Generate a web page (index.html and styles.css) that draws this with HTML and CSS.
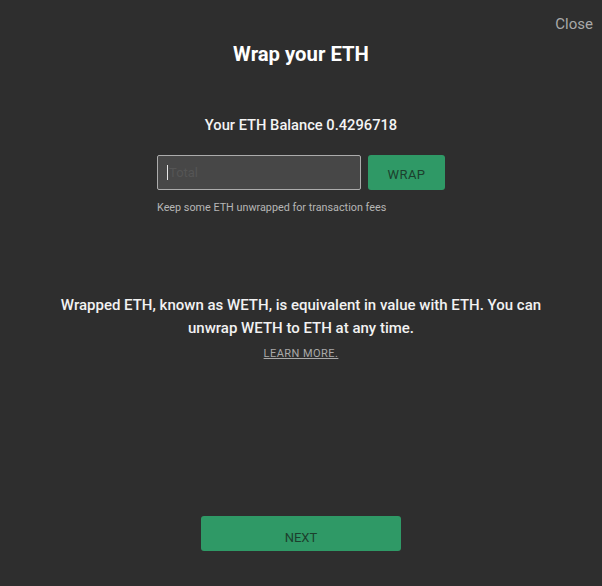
FILE: index.html
```html
<!DOCTYPE html>
<html>
<head>
<meta charset="utf-8">
<link rel="stylesheet" href="styles.css">
</head>
<body>
<div class="modal">
  <div class="topbar"><span class="close">Close</span></div>
  <h1 class="title">Wrap your ETH</h1>
  <div class="balance">Your ETH Balance 0.4296718</div>
  <div class="form">
    <div class="row">
      <div class="input"><span class="caret"></span><span class="placeholder">Total</span></div>
      <button class="wrap">WRAP</button>
    </div>
    <div class="hint">Keep some ETH unwrapped for transaction fees</div>
  </div>
  <p class="info">Wrapped ETH, known as WETH, is equivalent in value with ETH. You can unwrap WETH to ETH at any time.</p>
  <div class="learn">LEARN MORE.</div>
  <div class="spacer"></div>
  <button class="next">NEXT</button>
</div>
</body>
</html>
```

FILE: styles.css
```css
html, body {
  margin: 0;
  padding: 0;
  background: #2e2e2e;
  width: 602px;
  height: 586px;
  overflow: hidden;
}
.modal {
  font-family: Roboto, "DejaVu Sans", sans-serif;
  color: #f2f2f2;
  height: 586px;
  display: flex;
  flex-direction: column;
  align-items: center;
}
.topbar {
  align-self: stretch;
  display: flex;
  justify-content: flex-end;
  padding: 15px 9px 0 0;
  height: 21px;
}
.close {
  font-size: 15px;
  color: #a9a9a9;
}
.title {
  margin: 6px 0 0;
  font-size: 20.3px;
  font-weight: bold;
  color: #fff;
  line-height: 24px;
}
.balance {
  margin-top: 50px;
  font-size: 14.7px;
  font-weight: 500;
  line-height: 18px;
  color: #f4f4f4;
}
.form {
  margin-top: 21px;
  display: flex;
  flex-direction: column;
  width: 288px;
}
.row {
  display: flex;
  gap: 7px;
}
.input {
  box-sizing: border-box;
  width: 204px;
  height: 35px;
  background: #474747;
  border: 1px solid #acacac;
  border-radius: 2px;
  display: flex;
  align-items: center;
  padding-left: 9px;
}
.caret {
  width: 1px;
  height: 15px;
  background: #e6e6e6;
}
.placeholder {
  font-size: 13px;
  color: #555;
  margin-left: 1px;
}
.wrap {
  box-sizing: border-box;
  width: 77px;
  height: 35px;
  border: none;
  border-radius: 3px;
  background: #2f9966;
  color: #1c3f2d;
  font-family: inherit;
  font-size: 13px;
  letter-spacing: 0.4px;
  padding: 4px 0 0;
}
.hint {
  margin-top: 11px;
  font-size: 10.8px;
  color: #b6b6b6;
}
.info {
  margin: 80px 0 0;
  width: 500px;
  text-align: center;
  font-size: 15px;
  font-weight: 500;
  line-height: 23px;
  color: #f2f2f2;
}
.learn {
  margin-top: 7px;
  font-size: 11px;
  letter-spacing: 0.45px;
  color: #a9a9a9;
  text-decoration: underline;
}
.spacer {
  flex: 1;
}
.next {
  box-sizing: border-box;
  width: 200px;
  height: 35px;
  margin-bottom: 35px;
  border: none;
  border-radius: 3px;
  background: #2f9966;
  color: #1c3f2d;
  font-family: inherit;
  font-size: 13px;
  padding: 7px 0 0;
}
```
